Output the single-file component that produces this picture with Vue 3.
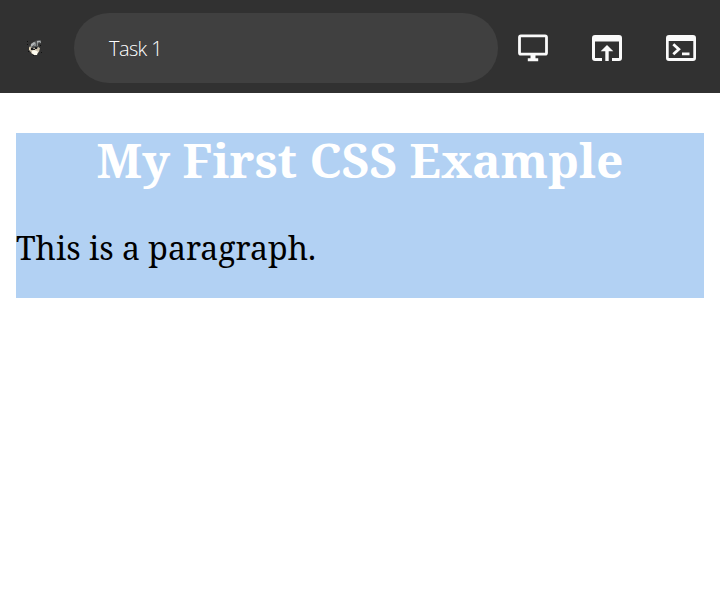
<script setup>
</script>

<template>
  <div class="screen">
    <header class="bar">
      <svg class="logo" viewBox="0 0 16 16">
        <path d="M0 1h1v1H0zM0 4h1v1H0zM13 5h1v1h-1zM14 12h1v1h-1zM6 15h1v1H6zM1 11h1v1H1z" fill="#101010" />
        <path d="M3 5l2-2 3-2 3-1 3 1-1 3-1-1-1 2 1 2-1 3H3L2 7z" fill="#4f5151" />
        <path d="M4 4l3-2 2 1-2 2-3 2zM10 1l3.500-.5.5 3-1.500-1.500-2.500 1z" fill="#b0b4b5" />
        <path d="M7 4h2v2H7zM10 3h1v3h-1z" fill="#858a8b" />
        <path d="M2 7l2-.5L5 9l3-1 2 1 1-2 2 1-1 4-3 2H5l-2-3-1-1z" fill="#cbc1ac" />
        <path d="M4 8h2v2H4zM6 9h2v1H6zM8 7h2v2H8z" fill="#1b1c1e" />
        <path d="M5 11l2-1 3 1 1 1-1 3H7l-2-2z" fill="#fffcef" />
        <path d="M2 8h1v2H2z" fill="#e8d9b6" />
      </svg>
      <div class="address"><span class="title">Task 1</span></div>
      <nav class="actions">
        <svg class="icon" viewBox="0 0 30 30">
          <path class="line" d="M3 2.800h24q1.500 0 1.500 1.500v15.400q0 1.500-1.500 1.500H3q-1.500 0-1.500-1.500V4.300q0-1.500 1.500-1.500z" />
          <path class="fill" d="M12.500 22h5v3.200h2.700v3H9.800v-3h2.700z" />
        </svg>
        <svg class="icon" viewBox="0 0 30 30">
          <path class="fill" fill-rule="evenodd" d="M3 2h24q3 0 3 3v20q0 3-3 3h-7v-3h7V8.500H3V25h7v3H3q-3 0-3-3V5q0-3 3-3z" />
          <path class="fill" d="M15 12l6.300 6.300h-4.600V28h-3.400v-9.700H8.700z" />
        </svg>
        <svg class="icon" viewBox="0 0 30 30">
          <path class="fill" fill-rule="evenodd" d="M3 2h24q3 0 3 3v20q0 3-3 3H3q-3 0-3-3V5q0-3 3-3zM2.700 8v17h24.600V8z" />
          <path class="prompt" d="M7.300 11.300l5.500 5-5.500 5M16 20.800h7.500" />
        </svg>
      </nav>
    </header>
    <main class="page">
      <section class="document">
        <h1>My First CSS Example</h1>
        <p>This is a paragraph.</p>
      </section>
    </main>
  </div>
</template>

<style>
body {
  background: #fff;
}
</style>

<style scoped>
.screen {
  min-height: 606px;
  background: #fff;
}
.bar {
  box-sizing: border-box;
  height: 93px;
  padding: 3px 24px 0 27px;
  display: flex;
  align-items: center;
  background: #313131;
}
.logo {
  width: 16px;
  height: 16px;
  flex: none;
}
.address {
  box-sizing: border-box;
  width: 424px;
  height: 70px;
  margin-left: 31px;
  padding: 2px 35px 0;
  display: flex;
  align-items: center;
  flex: none;
  border-radius: 35px;
  background: #404040;
}
.title {
  color: #fff;
  font: 300 20px/24px "Open Sans", Lato, sans-serif;
  letter-spacing: -0.6px;
}
.actions {
  margin-left: 20px;
  display: flex;
  gap: 44px;
}
.icon {
  width: 30px;
  height: 30px;
  flex: none;
}
.fill {
  fill: #fafafa;
}
.line {
  fill: none;
  stroke: #fafafa;
  stroke-width: 2.8;
}
.prompt {
  fill: none;
  stroke: #fafafa;
  stroke-width: 2.8;
}
.page {
  padding: 40px 16px;
}
.document {
  padding-bottom: 32px;
  background: #b2d1f3;
}
h1 {
  margin: 0 0 42px;
  color: #fff;
  font: bold 48px/54px "Noto Serif", serif;
  text-align: center;
}
p {
  margin: 0;
  color: #000;
  font: 32px/37px "Noto Serif", serif;
}
</style>
